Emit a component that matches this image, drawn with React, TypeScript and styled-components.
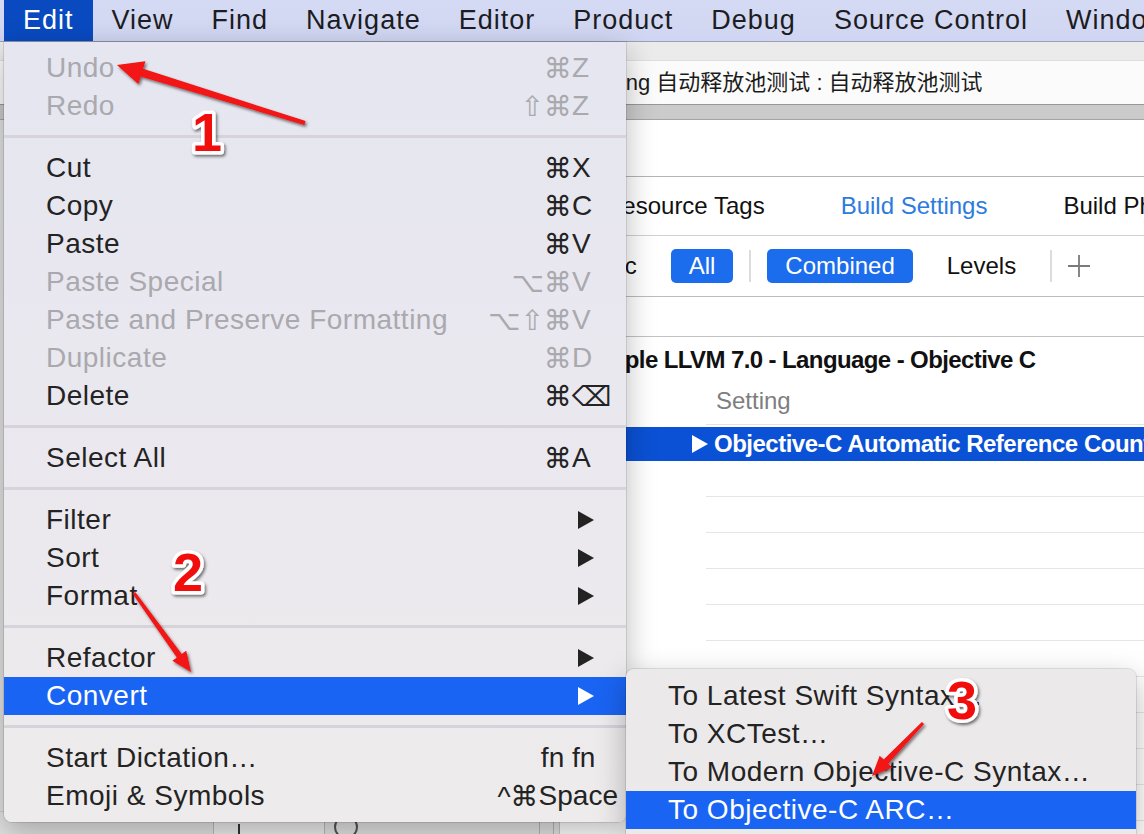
import React from 'react';
import styled, { createGlobalStyle } from 'styled-components';

const GlobalStyle = createGlobalStyle`
  html, body { margin: 0; padding: 0; }
  body {
    width: 1144px;
    height: 834px;
    overflow: hidden;
    background: #e6e6e6;
    font-family: "Liberation Sans", "DejaVu Sans", "Noto Sans CJK SC", Arial, sans-serif;
  }
  #root { width: 1144px; height: 834px; }
`;

const Screen = styled.div`
  position: relative;
  width: 1144px;
  height: 834px;
  overflow: hidden;
  display: flex;
  flex-direction: column;
  background: #ececec;
`;

/* ---------- menu bar ---------- */
const MenuBar = styled.div`
  flex: none;
  height: 42px;
  box-sizing: border-box;
  display: flex;
  align-items: stretch;
  padding-left: 4px;
  background: linear-gradient(180deg, #d5daf4 0%, #d0d6f1 100%);
  border-bottom: 1px solid #9ca0b6;
`;

const MenuTitle = styled.div<{ $active?: boolean }>`
  display: flex;
  align-items: center;
  padding: 0 19px;
  font-size: 27px;
  letter-spacing: 1px;
  white-space: nowrap;
  color: ${p => (p.$active ? '#ffffff' : '#1c1c22')};
  background: ${p => (p.$active ? '#094ac0' : 'transparent')};
`;

/* ---------- window behind ---------- */
const ToolbarStrip = styled.div`
  flex: none;
  height: 18px;
  background: #ebebeb;
`;

const JumpBar = styled.div`
  flex: none;
  height: 44px;
  box-sizing: border-box;
  display: flex;
  align-items: center;
  padding: 0 0 5px 419px;
  background: #fbfbfb;
  border-top: 1px solid #dedede;
  font-size: 22px;
  color: #1b1b1b;
  white-space: nowrap;
  font-family: "Liberation Sans", "Noto Sans CJK SC", sans-serif;
`;

const GrayBar = styled.div`
  flex: none;
  height: 16px;
  box-sizing: border-box;
  background: #cbcbcb;
  border-top: 1px solid #989898;
  border-bottom: 1px solid #a4a4a4;
`;

const Body = styled.div`
  flex: 1;
  display: flex;
  min-height: 0;
`;

const Sidebar = styled.div`
  flex: none;
  width: 560px;
  display: flex;
  flex-direction: column;
  background: #e2e2e2;
  border-right: 1px solid #c4c4c4;
  box-sizing: border-box;
`;

const SidebarFill = styled.div`
  flex: 1;
`;

const BottomBar = styled.div`
  flex: none;
  height: 22px;
  display: flex;
  align-items: stretch;
  padding-left: 213px;
  background: #e4e3e4;
  border-top: 1px solid #cfcfcf;
`;

const FieldCell = styled.div`
  width: 112px;
  box-sizing: border-box;
  border-left: 1px solid #b9b9b9;
  border-right: 1px solid #b9b9b9;
  background: #ededed;
  padding-left: 24px;
  display: flex;
  align-items: flex-end;
`;

const Caret = styled.div`
  width: 2px;
  height: 10px;
  background: #333;
`;

const RoundIcon = styled.div`
  width: 24px;
  height: 24px;
  margin: 3px 0 0 9px;
  border: 2px solid #555;
  border-radius: 50%;
  box-sizing: border-box;
`;

const BarSpacer = styled.div`
  flex: 1;
`;

const BarLines = styled.div`
  width: 13px;
  margin-right: 5px;
  border-left: 1px solid #b4b4b4;
  border-right: 1px solid #b4b4b4;
`;

const Editor = styled.div`
  flex: 1;
  min-width: 0;
  display: flex;
  flex-direction: column;
  background: #ffffff;
  overflow: hidden;
  font-size: 24px;
  color: #111;
`;

const TargetArea = styled.div`
  flex: none;
  height: 57px;
  box-sizing: border-box;
  border-bottom: 1px solid #b4b4b4;
`;

const TabRow = styled.div`
  flex: none;
  height: 59px;
  box-sizing: border-box;
  display: flex;
  align-items: center;
  gap: 76px;
  padding-left: 45px;
  border-bottom: 1px solid #d0d0d0;
  white-space: nowrap;
`;

const Tab = styled.div<{ $active?: boolean }>`
  color: ${p => (p.$active ? '#2c7be0' : '#111')};
`;

const FilterRow = styled.div`
  flex: none;
  height: 61px;
  box-sizing: border-box;
  display: flex;
  align-items: center;
  gap: 16px;
  border-bottom: 1px solid #bcbcbc;
  white-space: nowrap;
`;

const Pill = styled.div<{ $on?: boolean }>`
  height: 34px;
  display: flex;
  align-items: center;
  padding: 0 18px;
  border-radius: 5px;
  color: ${p => (p.$on ? '#ffffff' : '#111')};
  background: ${p => (p.$on ? '#1c6dee' : 'transparent')};
`;

const VDivider = styled.div`
  width: 2px;
  height: 32px;
  background: #dcdcdc;
`;

const SearchArea = styled.div`
  flex: none;
  height: 40px;
  box-sizing: border-box;
  border-bottom: 1px solid #c2c2c2;
`;

const SectionHeader = styled.div`
  flex: none;
  height: 46px;
  display: flex;
  align-items: center;
  padding-left: 34px;
  font-weight: bold;
  letter-spacing: -0.6px;
  white-space: nowrap;
`;

const GridRow = styled.div`
  flex: none;
  display: grid;
  grid-template-columns: 132px 1fr;
`;

const HeaderRow = styled(GridRow)`
  height: 42px;
`;

const HeaderCell = styled.div`
  margin-left: 14px;
  padding: 0 0 5px 10px;
  display: flex;
  align-items: center;
  border-bottom: 1px solid #e3e3e3;
  color: #7e7e7e;
`;

const SelectedRow = styled(GridRow)`
  height: 34px;
  margin-top: 2px;
  background: #0b51d5;
  color: #fff;
  font-weight: bold;
  letter-spacing: -0.5px;
  white-space: nowrap;
`;

const SelectedCell = styled.div`
  display: flex;
  align-items: center;
  gap: 6px;
`;

const Disclosure = styled.span`
  width: 0;
  height: 0;
  border-left: 16px solid #ffffff;
  border-top: 9px solid transparent;
  border-bottom: 9px solid transparent;
`;

const EmptyRow = styled(GridRow)`
  height: 36px;
`;

const EmptyCell = styled.div`
  margin-left: 14px;
  border-bottom: 1px solid #e6e6e6;
`;

/* ---------- Edit menu ---------- */
const Menu = styled.div`
  position: absolute;
  left: 4px;
  top: 42px;
  width: 622px;
  padding: 7px 0;
  box-sizing: border-box;
  background: linear-gradient(180deg, #e5e6f0 0%, #eae8ef 45%, #eeebec 100%);
  border-radius: 0 0 8px 8px;
  box-shadow: 0 10px 30px rgba(0, 0, 0, 0.28), 0 0 0 1px rgba(0, 0, 0, 0.1);
  font-size: 28px;
  letter-spacing: 0.5px;
  z-index: 10;
`;

const Item = styled.div<{ $disabled?: boolean; $selected?: boolean }>`
  height: 38px;
  display: flex;
  align-items: center;
  padding: 0 30px 0 42px;
  white-space: nowrap;
  color: ${p => (p.$selected ? '#ffffff' : p.$disabled ? '#a9a9ae' : '#232323')};
  background: ${p => (p.$selected ? '#1a64f3' : 'transparent')};
`;

const Label = styled.span`
  flex: 1;
`;

const Shortcut = styled.span<{ $overhang?: boolean }>`
  display: flex;
  letter-spacing: 0;
  font-family: "Liberation Sans", "DejaVu Sans", sans-serif;
  margin-right: ${p => (p.$overhang ? '-22px' : '0')};
`;

const Key = styled.span<{ $wide?: boolean }>`
  width: ${p => (p.$wide ? 'auto' : '24px')};
  overflow: visible;
`;

const SubArrow = styled.span`
  width: 0;
  height: 0;
  margin-right: 2px;
  border-left: 16px solid currentColor;
  border-top: 9px solid transparent;
  border-bottom: 9px solid transparent;
`;

const Separator = styled.div`
  height: 3px;
  margin: 10px 0 11px;
  background: #d6d4da;
`;

const Submenu = styled.div`
  position: absolute;
  left: 626px;
  top: 669px;
  width: 510px;
  padding: 8px 0 7px;
  box-sizing: border-box;
  background: #ece9eb;
  border-radius: 8px 8px 0 0;
  box-shadow: 0 10px 30px rgba(0, 0, 0, 0.28), 0 0 0 1px rgba(0, 0, 0, 0.1);
  font-size: 28px;
  letter-spacing: 0.5px;
  z-index: 11;
`;

/* ---------- annotations ---------- */
const Annotations = styled.svg`
  position: absolute;
  left: 0;
  top: 0;
  z-index: 20;
  pointer-events: none;
  overflow: visible;
`;

const Badge = styled.text`
  font-family: "Liberation Sans", Arial, sans-serif;
  font-weight: bold;
  font-size: 54px;
  fill: #f20d0d;
  stroke: #ffffff;
  stroke-width: 7px;
  stroke-linejoin: round;
  paint-order: stroke;
`;

type Entry = {
  label: string;
  mods?: string;
  keyChar?: string;
  disabled?: boolean;
  sub?: boolean;
  selected?: boolean;
  wide?: boolean;
};

const groups: Entry[][] = [
  [
    { label: 'Undo', mods: '⌘', keyChar: 'Z', disabled: true },
    { label: 'Redo', mods: '⇧⌘', keyChar: 'Z', disabled: true },
  ],
  [
    { label: 'Cut', mods: '⌘', keyChar: 'X' },
    { label: 'Copy', mods: '⌘', keyChar: 'C' },
    { label: 'Paste', mods: '⌘', keyChar: 'V' },
    { label: 'Paste Special', mods: '⌥⌘', keyChar: 'V', disabled: true },
    { label: 'Paste and Preserve Formatting', mods: '⌥⇧⌘', keyChar: 'V', disabled: true },
    { label: 'Duplicate', mods: '⌘', keyChar: 'D', disabled: true },
    { label: 'Delete', mods: '⌘', keyChar: '⌫' },
  ],
  [{ label: 'Select All', mods: '⌘', keyChar: 'A' }],
  [
    { label: 'Filter', sub: true },
    { label: 'Sort', sub: true },
    { label: 'Format', sub: true },
  ],
  [
    { label: 'Refactor', sub: true },
    { label: 'Convert', sub: true, selected: true },
  ],
  [
    { label: 'Start Dictation…', mods: 'fn\u00a0', keyChar: 'fn' },
    { label: 'Emoji & Symbols', mods: '^⌘', keyChar: 'Space', wide: true },
  ],
];

const subItems = [
  'To Latest Swift Syntax…',
  'To XCTest…',
  'To Modern Objective-C Syntax…',
  'To Objective-C ARC…',
];

const menuTitles = ['Edit', 'View', 'Find', 'Navigate', 'Editor', 'Product', 'Debug', 'Source Control', 'Window', 'Help'];

function arrowPoints(
  x1: number, y1: number, x2: number, y2: number,
  tailW: number, neckW: number, headW: number, headL: number,
): string {
  const dx = x2 - x1;
  const dy = y2 - y1;
  const len = Math.hypot(dx, dy);
  const ux = dx / len;
  const uy = dy / len;
  const nx = -uy;
  const ny = ux;
  const bx = x2 - ux * headL;
  const by = y2 - uy * headL;
  const pts: [number, number][] = [
    [x1 + nx * tailW / 2, y1 + ny * tailW / 2],
    [bx + nx * neckW / 2, by + ny * neckW / 2],
    [bx + nx * headW / 2, by + ny * headW / 2],
    [x2, y2],
    [bx - nx * headW / 2, by - ny * headW / 2],
    [bx - nx * neckW / 2, by - ny * neckW / 2],
    [x1 - nx * tailW / 2, y1 - ny * tailW / 2],
  ];
  return pts.map(p => `${p[0].toFixed(1)},${p[1].toFixed(1)}`).join(' ');
}

function MenuEntry({ e }: { e: Entry }) {
  return (
    <Item $disabled={e.disabled} $selected={e.selected}>
      <Label>{e.label}</Label>
      {e.sub && <SubArrow />}
      {e.keyChar && (
        <Shortcut $overhang={e.wide}>
          <span>{e.mods}</span>
          <Key $wide={e.wide}>{e.keyChar}</Key>
        </Shortcut>
      )}
    </Item>
  );
}

export default function App() {
  return (
    <>
      <GlobalStyle />
      <Screen>
        <MenuBar>
          {menuTitles.map(t => (
            <MenuTitle key={t} $active={t === 'Edit'}>{t}</MenuTitle>
          ))}
        </MenuBar>
        <ToolbarStrip />
        <JumpBar>AutoreleasePoolTesting 自动释放池测试 : 自动释放池测试</JumpBar>
        <GrayBar />
        <Body>
          <Sidebar>
            <SidebarFill />
            <BottomBar>
              <FieldCell><Caret /></FieldCell>
              <RoundIcon />
              <BarSpacer />
              <BarLines />
            </BottomBar>
          </Sidebar>
          <Editor>
            <TargetArea />
            <TabRow>
              <Tab>Resource Tags</Tab>
              <Tab $active>Build Settings</Tab>
              <Tab>Build Phases</Tab>
            </TabRow>
            <FilterRow>
              <Pill>Basic</Pill>
              <Pill $on>All</Pill>
              <VDivider />
              <Pill $on>Combined</Pill>
              <Pill>Levels</Pill>
              <VDivider />
              <svg width="22" height="22" viewBox="0 0 22 22">
                <path d="M11 0v22M0 11h22" stroke="#7a7a7a" strokeWidth="1.8" fill="none" />
              </svg>
            </FilterRow>
            <SearchArea />
            <SectionHeader>Apple LLVM 7.0 - Language - Objective C</SectionHeader>
            <HeaderRow>
              <div />
              <HeaderCell>Setting</HeaderCell>
            </HeaderRow>
            <SelectedRow>
              <div />
              <SelectedCell>
                <Disclosure />
                <span>Objective-C Automatic Reference Counting</span>
              </SelectedCell>
            </SelectedRow>
            {Array.from({ length: 10 }).map((_, i) => (
              <EmptyRow key={i}>
                <div />
                <EmptyCell />
              </EmptyRow>
            ))}
          </Editor>
        </Body>

        <Menu>
          {groups.map((g, gi) => (
            <React.Fragment key={gi}>
              {gi > 0 && <Separator />}
              {g.map(e => <MenuEntry key={e.label} e={e} />)}
            </React.Fragment>
          ))}
        </Menu>

        <Submenu>
          {subItems.map((s, i) => (
            <Item key={s} $selected={i === 3}>
              <Label>{s}</Label>
            </Item>
          ))}
        </Submenu>

        <Annotations width="1144" height="834" viewBox="0 0 1144 834">
          <defs>
            <filter id="shadow" x="-20%" y="-20%" width="140%" height="140%">
              <feDropShadow dx="1.5" dy="2" stdDeviation="1.5" floodColor="#000" floodOpacity="0.55" />
            </filter>
          </defs>
          <g filter="url(#shadow)" fill="#f21212">
            <polygon points={arrowPoints(305, 123, 117, 65, 4, 8, 24, 26)} />
            <polygon points={arrowPoints(134, 593, 191, 672, 3, 6, 17, 20)} />
            <polygon points={arrowPoints(923, 723, 872, 776, 3, 6, 17, 20)} />
          </g>
          <g filter="url(#shadow)">
            <Badge x="207" y="151" textAnchor="middle">1</Badge>
            <Badge x="188" y="591" textAnchor="middle">2</Badge>
            <Badge x="962" y="719" textAnchor="middle">3</Badge>
          </g>
        </Annotations>
      </Screen>
    </>
  );
}
